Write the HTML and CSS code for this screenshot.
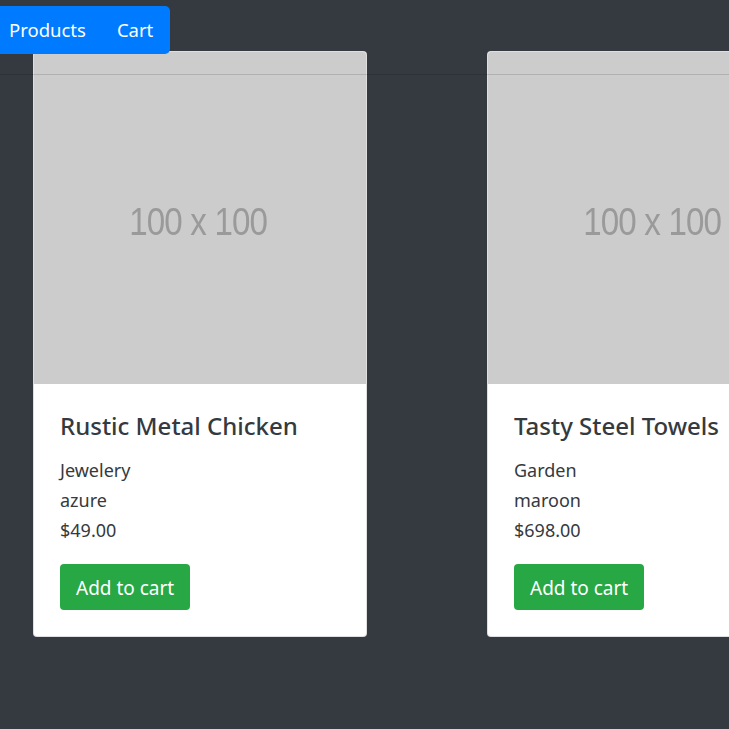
FILE: index.html
```html
<!DOCTYPE html>
<html>
<head>
<meta charset="utf-8">
<link rel="stylesheet" href="styles.css">
</head>
<body>
<header class="topbar">
  <nav class="nav">
    <a class="nav-link">Products</a>
    <a class="nav-link">Cart</a>
  </nav>
</header>
<main class="products">
  <div class="card">
    <div class="thumb"><span class="thumb-text">100 x 100</span></div>
    <div class="card-body">
      <h4 class="card-title">Rustic Metal Chicken</h4>
      <p class="line">Jewelery</p>
      <p class="line">azure</p>
      <p class="line">$49.00</p>
      <button class="btn">Add to cart</button>
    </div>
  </div>
  <div class="card">
    <div class="thumb"><span class="thumb-text">100 x 100</span></div>
    <div class="card-body">
      <h4 class="card-title">Tasty Steel Towels</h4>
      <p class="line">Garden</p>
      <p class="line">maroon</p>
      <p class="line">$698.00</p>
      <button class="btn">Add to cart</button>
    </div>
  </div>
</main>
</body>
</html>
```
FILE: styles.css
```css
html, body {
  margin: 0;
  padding: 0;
  background: #343a40;
  height: 100%;
  overflow: hidden;
  font-family: "Noto Sans", "Open Sans", sans-serif;
  color: #343a40;
}
.topbar {
  position: fixed;
  top: 0;
  left: 0;
  right: 0;
  height: 74px;
  border-bottom: 1px solid rgba(0, 0, 0, 0.13);
  z-index: 5;
}
.nav {
  position: absolute;
  top: 6px;
  left: -6px;
  display: flex;
  align-items: center;
  height: 48px;
  width: 176px;
  box-sizing: border-box;
  padding-left: 15px;
  background: #007bff;
  border-radius: 5px;
}
.nav-link {
  color: #fff;
  font-size: 18.5px;
  line-height: 30px;
  margin-right: 31px;
}
.products {
  display: flex;
  gap: 120px;
  padding: 51px 0 0 33px;
}
.card {
  flex: 0 0 auto;
  width: 334px;
  box-sizing: border-box;
  background: #fff;
  border: 1px solid rgba(0, 0, 0, 0.125);
  border-radius: 4px;
  overflow: hidden;
}
.thumb {
  height: 332px;
  background: #cccccc;
  display: flex;
  align-items: center;
  justify-content: center;
}
.thumb-text {
  font-family: "Liberation Sans", Arial, sans-serif;
  font-size: 39px;
  color: #9a9a9a;
  transform: scaleX(0.85);
  filter: blur(0.7px);
  letter-spacing: -1px;
  margin-top: 8px;
  margin-left: -4px;
}
.card-body {
  padding: 27px 26px 26px;
}
.card-title {
  margin: 0 0 15px;
  font-size: 24px;
  font-weight: 500;
  line-height: 29px;
  color: #343a40;
}
.line {
  margin: 0;
  font-size: 18px;
  line-height: 30px;
  color: #343a40;
}
.btn {
  margin-top: 19px;
  height: 46px;
  padding: 2px 16px 0;
  border: none;
  border-radius: 4px;
  background: #28a745;
  color: #fff;
  font-family: inherit;
  font-size: 19px;
  display: block;
}
```
